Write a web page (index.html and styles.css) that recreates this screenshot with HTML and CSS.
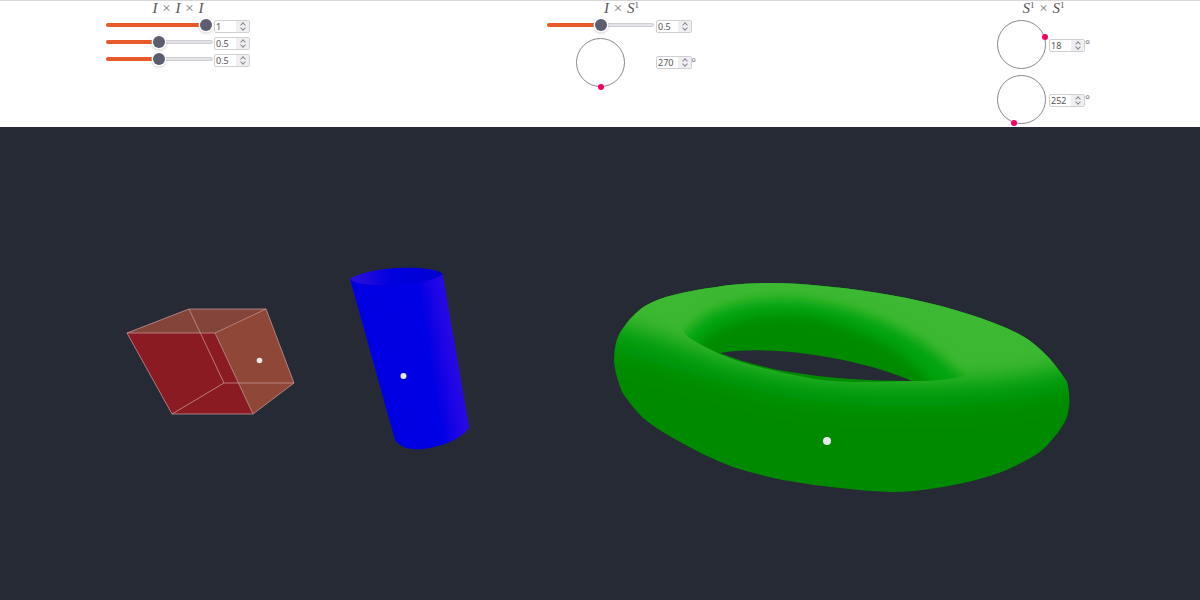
FILE: index.html
```html
<!DOCTYPE html>
<html lang="en">
<head>
    <meta charset="UTF-8">
    <meta name="viewport" content="width=device-width, initial-scale=1.0">
    <title>Product spaces</title>
    <link rel="stylesheet" href="styles.css">
</head>
<body>
    <!-- Parameter controls -->
    <div class="controls">
        <div class="group group-cube">
            <div class="math">I <span class="op">×</span> I <span class="op">×</span> I</div>
            <div class="row">
                <div class="slider"><div class="fill" style="width: 100px"></div><div class="thumb" style="left: 100px"></div></div>
                <div class="num">1<span class="spin"></span></div>
            </div>
            <div class="row">
                <div class="slider"><div class="fill" style="width: 53px"></div><div class="thumb" style="left: 53px"></div></div>
                <div class="num">0.5<span class="spin"></span></div>
            </div>
            <div class="row">
                <div class="slider"><div class="fill" style="width: 53px"></div><div class="thumb" style="left: 53px"></div></div>
                <div class="num">0.5<span class="spin"></span></div>
            </div>
        </div>

        <div class="group group-cylinder">
            <div class="math">I <span class="op">×</span> S<sup>1</sup></div>
            <div class="row">
                <div class="slider"><div class="fill" style="width: 54px"></div><div class="thumb" style="left: 54px"></div></div>
                <div class="num">0.5<span class="spin"></span></div>
            </div>
            <div class="row">
                <div class="dial-cell">
                    <div class="dial"><div class="pin" style="left: 23.500px; top: 47.500px"></div></div>
                </div>
                <div class="num">270<span class="spin"></span></div>
                <span class="deg">°</span>
            </div>
        </div>

        <div class="group group-torus">
            <div class="math">S<sup>1</sup> <span class="op">×</span> S<sup>1</sup></div>
            <div class="row">
                <div class="dial"><div class="pin" style="left: 46.500px; top: 16px"></div></div>
                <div class="num">18<span class="spin"></span></div>
                <span class="deg">°</span>
            </div>
            <div class="row">
                <div class="dial"><div class="pin" style="left: 16px; top: 46.500px"></div></div>
                <div class="num">252<span class="spin"></span></div>
                <span class="deg">°</span>
            </div>
        </div>
    </div>

    <!-- 3D view, coordinates are page pixels -->
    <svg class="scene" viewBox="0 127 1200 473" width="1200" height="473">
        <defs>
            <linearGradient id="cylBody" gradientUnits="userSpaceOnUse" x1="372" y1="362" x2="458" y2="348">
                <stop offset="0" stop-color="#0000e2"/>
                <stop offset="0.66" stop-color="#0000e4"/>
                <stop offset="0.88" stop-color="#2206e6"/>
                <stop offset="1" stop-color="#2a0ae0"/>
            </linearGradient>
            <linearGradient id="cylTop" gradientUnits="userSpaceOnUse" x1="350" y1="279" x2="443" y2="272">
                <stop offset="0" stop-color="#3010d8"/>
                <stop offset="0.45" stop-color="#0000e0"/>
                <stop offset="1" stop-color="#0000d0"/>
            </linearGradient>
            <filter id="blurWide" x="-30%" y="-30%" width="160%" height="160%"><feGaussianBlur stdDeviation="11"/></filter>
            <filter id="blurMid" x="-30%" y="-30%" width="160%" height="160%"><feGaussianBlur stdDeviation="10"/></filter>
            <filter id="blurWall" x="-30%" y="-30%" width="160%" height="160%"><feGaussianBlur stdDeviation="6"/></filter>
            <clipPath id="torusClip">
                <path d="M614 362 C614 350 616 340 620 333 C628 320 636 312 645 306 C660 297 685 291 717 287 C740 283 770 282 800 284 C840 287 880 292 920 301 C960 310 995 322 1017 333 C1035 342 1052 358 1067 382 C1069 390 1070 398 1069 407 C1068 415 1066 420 1063 425 C1056 436 1048 445 1040 452 C1025 462 1010 469 993 475 C978 480 960 484 943 487 C925 490 908 492 890 492 C872 491 855 490 840 488 C820 486 800 483 783 480 C765 476 748 472 733 467 C712 459 692 449 673 438 C662 432 652 425 643 418 C635 410 628 401 622 392 C618 382 615 372 614 362 Z"/>
            </clipPath>
            <clipPath id="wallClip">
                <path d="M670 315 L688 337 C700 345 712 350 720 354 C745 365 775 371 815 379 C850 384 880 381 912 381 C935 381 948 380 965 376 L1010 340 L900 280 L720 280 Z"/>
            </clipPath>
        </defs>

        <!-- cube -->
        <g class="cube">
            <polygon class="face-front" points="127,333 215,333 253,414 172,414"/>
            <polygon class="face-top" points="127,333 189,309 266,309 215,333"/>
            <polygon class="face-side" points="215,333 266,309 294,383 253,414"/>
            <path class="edges" d="M127 333 L189 309 L266 309 L294 383 L253 414 L172 414 Z M127 333 L215 333 L266 309 M215 333 L253 414 M189 309 L224 383 L294 383 M172 414 L224 383"/>
            <circle class="dot" cx="259.500" cy="360.500" r="2.800"/>
        </g>

        <!-- cylinder -->
        <path d="M350 279 L395 440 C402 449 412 450 423 449 C440 447 460 440 469.300 428 L442.700 274 Z" fill="url(#cylBody)"/>
        <path d="M350 279 C360 272 385 268 400 268 C420 267 438 269 442.700 274 C435 281 412 284 395 285 C375 286 356 285 350 279 Z" fill="url(#cylTop)"/>
        <circle class="dot" cx="403.500" cy="376" r="3"/>

        <!-- torus -->
        <g clip-path="url(#torusClip)">
            <rect x="600" y="270" width="480" height="230" fill="#008a00"/>
            <path d="M590 345 L640 270 L1080 270 L1090 385 C1000 410 880 412 790 398 C730 386 670 368 590 345 Z" fill="#009c0a" filter="url(#blurWide)"/>
            <path d="M590 318 L640 255 L1090 255 L1090 358 C1050 374 1000 382 900 382 C840 382 790 378 720 358 C680 344 640 328 590 318 Z" fill="#3cb830" filter="url(#blurMid)"/>
        </g>
        <g clip-path="url(#wallClip)">
            <path d="M680 345 C692 312 740 296 800 300 C865 308 930 335 972 390 L690 392 Z" fill="#00a40c" filter="url(#blurWall)"/>
            <path d="M697 348 C712 322 760 312 805 316 C855 324 908 350 938 390 L700 392 Z" fill="#008a00" filter="url(#blurWall)"/>
        </g>
        <path class="hole" d="M720 353 C745 349 775 350 800 353 C840 358 880 367 912 381 C870 381 825 378 790 372 C765 368 740 361 720 353 Z"/>
        <circle class="dot" cx="827" cy="441" r="4"/>
    </svg>
</body>
</html>
```

FILE: styles.css
```css
body {
    margin: 0;
    background-color: #252a35;
    font-family: "Noto Sans", "Open Sans", sans-serif;
    overflow: hidden;
}
.controls {
    display: flex;
    align-items: flex-start;
    height: 126px;
    padding-left: 106px;
    background-color: #fff;
    border-top: 1px solid #d8d8d8;
    overflow: hidden;
}
.group {
    display: flex;
    flex-direction: column;
    gap: 4px;
}
.group-cube {
    width: 144px;
}
.group-cylinder {
    width: 149px;
    margin-left: 297px;
}
.group-torus {
    width: 93px;
    margin-left: 301px;
    gap: 6px;
}
.group-cylinder .row + .row {
    margin-top: 1px;
}
.group-cylinder .row {
    gap: 2px;
}
.math {
    height: 15px;
    font-family: "Liberation Serif", serif;
    font-style: italic;
    font-size: 15px;
    line-height: 15px;
    color: #555;
    text-align: center;
    white-space: nowrap;
}
.group-torus .math {
    margin-bottom: -2px;
}
.math .op {
    font-style: normal;
    color: #777;
    margin: 0 1px;
}
.math sup {
    font-style: normal;
    font-size: 9px;
    line-height: 0;
    vertical-align: 5px;
}
.row {
    display: flex;
    align-items: center;
    gap: 1px;
}
.group-torus .row {
    gap: 3px;
}
.group-torus .num {
    margin-top: 2px;
}
.slider {
    position: relative;
    width: 107px;
    height: 13px;
    flex: none;
}
.slider::before {
    content: "";
    position: absolute;
    left: 0;
    right: 0;
    top: 3px;
    height: 2px;
    background-color: #e4e4e8;
    border: 1px solid #cfcfd4;
    border-radius: 3px;
}
.fill {
    position: absolute;
    left: 0;
    top: 3px;
    height: 4px;
    background-color: #e85a2a;
    border-radius: 2px;
}
.thumb {
    position: absolute;
    top: -1px;
    width: 12px;
    height: 12px;
    margin-left: -6px;
    background-color: #5c5e70;
    border-radius: 50%;
    box-shadow: 0 0 0 1.500px #fff, 0 1px 3px 1px rgba(0, 0, 0, 0.25);
}
.num {
    position: relative;
    display: flex;
    align-items: center;
    flex: none;
    width: 33px;
    height: 11px;
    padding-left: 1px;
    border: 1px solid #cfcfd4;
    border-radius: 2px;
    background-color: #fff;
    font-size: 9px;
    line-height: 11px;
    color: #555;
}
.spin {
    position: absolute;
    right: 0;
    top: 0;
    bottom: 0;
    width: 13px;
    background-color: #efeff1;
}
.spin::before,
.spin::after {
    content: "";
    position: absolute;
    left: 5px;
    width: 3px;
    height: 3px;
    border-left: 1px solid #8a8a90;
    border-top: 1px solid #8a8a90;
}
.spin::before {
    top: 2px;
    transform: rotate(45deg);
}
.spin::after {
    bottom: 2px;
    transform: rotate(225deg);
}
.deg {
    margin-left: -3px;
    font-size: 12px;
    line-height: 12px;
    color: #888;
}
.dial-cell {
    display: flex;
    justify-content: center;
    flex: none;
    width: 107px;
}
.dial {
    position: relative;
    width: 47px;
    height: 47px;
    flex: none;
    border: 1px solid #888;
    border-radius: 50%;
}
.pin {
    position: absolute;
    width: 6px;
    height: 6px;
    margin: -3px 0 0 -3px;
    background-color: #f5005f;
    border-radius: 50%;
}
.scene {
    display: block;
}
.face-front {
    fill: #8b1b23;
}
.face-top {
    fill: #84443a;
}
.face-side {
    fill: #8f4737;
}
.edges {
    fill: none;
    stroke: #c99a98;
    stroke-width: 1;
    opacity: 0.75;
}
.dot {
    fill: #e8e8e8;
    filter: blur(0.4px);
}
.hole {
    fill: #252a35;
}
```
